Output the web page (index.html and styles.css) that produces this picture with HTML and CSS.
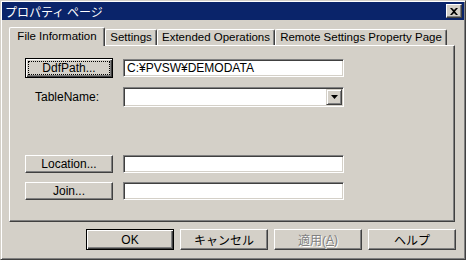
FILE: index.html
```html
<!DOCTYPE html>
<html>

<head>
    <title>プロパティ ページ</title>
    <link rel="stylesheet" href="styles.css">
</head>

<body>
    <div class="window">
        <div class="titlebar">
            <span class="title">プロパティ ページ</span>
            <div class="close">
                <svg width="8" height="7" viewBox="0 0 8 7">
                    <path d="M0 0h2l2 2 2-2h2L5 3.5 8 7H6L4 5 2 7H0l3-3.5z" fill="#000"/>
                </svg>
            </div>
        </div>

        <div class="tabs">
            <div class="tab active">File Information</div>
            <div class="tab tab-settings">Settings</div>
            <div class="tab tab-extended">Extended Operations</div>
            <div class="tab tab-remote">Remote Settings Property Page</div>
        </div>

        <div class="panel">
            <div class="row row-ddf">
                <div class="btn focused"><span class="focus">DdfPath...</span></div>
                <div class="field">C:¥PVSW¥DEMODATA</div>
            </div>
            <div class="row row-table">
                <div class="label">TableName:</div>
                <div class="field combo">
                    <div class="drop">
                        <svg width="7" height="4" viewBox="0 0 7 4"><path d="M0 0h7L3.5 4z" fill="#000"/></svg>
                    </div>
                </div>
            </div>
            <div class="row row-small row-location">
                <div class="btn">Location...</div>
                <div class="field"></div>
            </div>
            <div class="row row-small">
                <div class="btn">Join...</div>
                <div class="field"></div>
            </div>
        </div>

        <div class="actions">
            <div class="btn default">OK</div>
            <div class="btn">キャンセル</div>
            <div class="btn disabled">適用(<u>A</u>)</div>
            <div class="btn">ヘルプ</div>
        </div>
    </div>
</body>

</html>
```

FILE: styles.css
```css
body {
    margin: 0;
    background-color: #d4d0c8;
    font-family: "Liberation Sans", "Noto Sans CJK JP", sans-serif;
    font-size: 12px;
    color: #000;
}

.window {
    width: 466px;
    height: 260px;
    box-sizing: border-box;
    padding: 1px;
    background: #d4d0c8;
    border: 1px solid;
    border-color: #d4d0c8 #404040 #404040 #d4d0c8;
    box-shadow: inset 1px 1px #fff, inset -1px -1px #808080;
}

.titlebar {
    display: flex;
    align-items: center;
    justify-content: space-between;
    height: 18px;
    background: #0a246a;
    color: #fff;
    padding: 0 2px 0 3px;
}

.title {
    font-family: "Noto Sans CJK JP", sans-serif;
    font-size: 12px;
}

.close {
    display: flex;
    align-items: center;
    justify-content: center;
    width: 16px;
    height: 14px;
    box-sizing: border-box;
    background: #d4d0c8;
    border: 1px solid;
    border-color: #fff #404040 #404040 #fff;
    box-shadow: inset -1px -1px #808080;
}

/* tabs */
.tabs {
    display: flex;
    align-items: flex-end;
    margin: 7px 0 0 7px;
    height: 18px;
}

.tab {
    position: relative;
    height: 16px;
    box-sizing: border-box;
    padding-top: 1px;
    font-size: 11.5px;
    text-align: center;
    white-space: nowrap;
    border: 1px solid;
    border-bottom: none;
    border-color: #fff #404040 #fff #fff;
    border-radius: 2px 2px 0 0;
    box-shadow: inset -1px 0 #808080;
}

.tab.active {
    width: 96px;
    height: 19px;
    margin-bottom: -1px;
    padding-top: 2px;
    background: #d4d0c8;
    z-index: 1;
}

.tab-settings {
    width: 52px;
}

.tab-extended {
    width: 118px;
}

.tab-remote {
    width: 172px;
}

/* page */
.panel {
    width: 446px;
    height: 177px;
    box-sizing: border-box;
    margin-left: 7px;
    padding: 12px 0 0 15px;
    border: 1px solid;
    border-color: #fff #404040 #404040 #fff;
    box-shadow: inset -1px -1px #808080;
}

.row {
    display: flex;
    align-items: center;
    height: 20px;
    gap: 10px;
}

.row-table {
    margin-top: 9px;
}

.row-small {
    height: 18px;
    margin-top: 9px;
}

.row-location {
    margin-top: 48px;
}

.label {
    width: 88px;
    padding-left: 10px;
    box-sizing: border-box;
}

.btn {
    display: flex;
    align-items: center;
    justify-content: center;
    width: 88px;
    height: 18px;
    box-sizing: border-box;
    background: #d4d0c8;
    border: 1px solid;
    border-color: #fff #404040 #404040 #fff;
    box-shadow: inset -1px -1px #808080;
}

.btn.focused,
.btn.default {
    height: 20px;
    border-color: #000;
    box-shadow: inset 1px 1px #fff, inset -1px -1px #404040, inset -2px -2px #808080;
}

.focus {
    display: flex;
    align-items: center;
    justify-content: center;
    width: 80px;
    height: 12px;
    outline: 1px dotted #000;
}

.field {
    position: relative;
    width: 221px;
    height: 18px;
    box-sizing: border-box;
    padding-left: 3px;
    line-height: 16px;
    background: #fff;
    border: 1px solid;
    border-color: #808080 #fff #fff #808080;
    box-shadow: inset 1px 1px #404040, inset -1px -1px #d4d0c8;
}

.combo {
    height: 20px;
}

.drop {
    position: absolute;
    top: 1px;
    right: 1px;
    display: flex;
    align-items: center;
    justify-content: center;
    width: 16px;
    height: 16px;
    box-sizing: border-box;
    background: #d4d0c8;
    border: 1px solid;
    border-color: #d4d0c8 #404040 #404040 #d4d0c8;
    box-shadow: inset 1px 1px #fff, inset -1px -1px #808080;
}

/* bottom buttons */
.actions {
    display: flex;
    justify-content: flex-end;
    gap: 6px;
    width: 447px;
    margin: 7px 0 0 7px;
}

.actions .btn {
    height: 21px;
}

.btn.disabled {
    color: #808080;
    text-shadow: 1px 1px #fff;
}
```
